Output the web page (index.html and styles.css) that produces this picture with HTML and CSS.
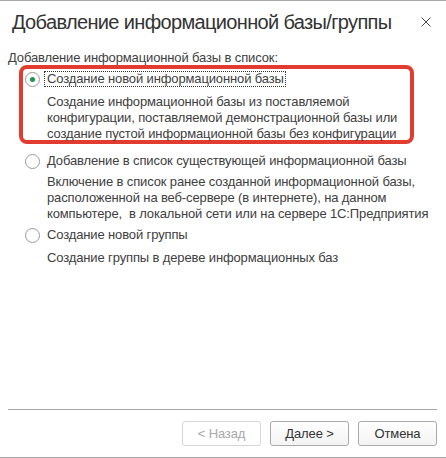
FILE: index.html
```html
<!DOCTYPE html>
<html lang="ru">
<head>
<meta charset="utf-8">
<title>Добавление информационной базы/группы</title>
<link rel="stylesheet" href="styles.css">
</head>
<body>
<div class="window">
  <div class="titlebar">
    <div class="title">Добавление информационной базы/группы</div>
    <div class="close">
      <svg width="10" height="10" viewBox="0 0 10 10"><path d="M0.5 0.5 L9.5 9.5 M9.5 0.5 L0.5 9.5" stroke="#4a4a4a" stroke-width="1" fill="none"/></svg>
    </div>
  </div>
  <div class="content">
    <div class="subtitle">Добавление информационной базы в список:</div>
    <div class="group highlight">
      <div class="radio-row">
        <span class="radio checked"></span>
        <span class="label focus">Создание новой информационной базы</span>
      </div>
      <div class="desc last-in-box">Создание информационной базы из поставляемой<br>конфигурации, поставляемой демонстрационной базы или<br>создание пустой информационной базы без конфигурации</div>
    </div>
    <div class="group">
      <div class="radio-row">
        <span class="radio"></span>
        <span class="label">Добавление в список существующей информационной базы</span>
      </div>
      <div class="desc">Включение в список ранее созданной информационной базы,<br>расположенной на веб-сервере (в интернете), на данном<br>компьютере,&nbsp; в локальной сети или на сервере 1С:Предприятия</div>
    </div>
    <div class="group third">
      <div class="radio-row">
        <span class="radio"></span>
        <span class="label">Создание новой группы</span>
      </div>
      <div class="desc">Создание группы в дереве информационных баз</div>
    </div>
  </div>
  <div class="footer">
    <div class="separator"></div>
    <div class="buttons">
      <div class="btn disabled">&lt; Назад</div>
      <div class="btn">Далее &gt;</div>
      <div class="btn">Отмена</div>
    </div>
  </div>
</div>
</body>
</html>
```
FILE: styles.css
```css
* { box-sizing: border-box; }
html, body { margin: 0; padding: 0; background: #fff; }
body {
  font-family: "Liberation Sans", Arial, sans-serif;
  font-size: 13px;
  letter-spacing: -0.13px;
  color: #404040;
}
.window {
  width: 446px;
  height: 458px;
  border-top: 1px solid #a6a6a6;
  border-bottom: 1px solid #a6a6a6;
  display: flex;
  flex-direction: column;
}
.titlebar {
  display: flex;
  align-items: flex-start;
  padding: 9px 0 0 12px;
  height: 33px;
}
.title {
  font-size: 20px;
  line-height: 24px;
  letter-spacing: -0.65px;
  color: #333;
  white-space: nowrap;
  flex: 1;
}
.close {
  width: 10px;
  height: 10px;
  margin: 7px 15px 0 0;
  display: flex;
}
.content {
  flex: 1;
  padding: 0 8px;
}
.subtitle {
  margin-top: 16px;
  line-height: 16px;
  white-space: nowrap;
}
.group {
  margin-left: 17px;
  margin-top: 4px;
}
.group.highlight {
  margin-left: 11px;
  margin-right: 24px;
  margin-top: -1px;
  border: 4px solid #e23b30;
  border-radius: 8px;
  padding: 2px 0 0 2px;
}
.group.highlight + .group { margin-top: 9px; }
.group.third { margin-top: 5px; }
.radio-row {
  display: flex;
  align-items: center;
  height: 16px;
}
.radio {
  width: 15px;
  height: 15px;
  border: 1px solid #9a9a9a;
  border-radius: 50%;
  background: #fff;
  display: flex;
  align-items: center;
  justify-content: center;
  flex: none;
  margin-right: 4px;
}
.radio.checked::after {
  content: "";
  width: 5px;
  height: 5px;
  border-radius: 50%;
  background: #17994a;
}
.label {
  line-height: 14px;
  padding: 0 1px 0 2px;
  border: 1px solid transparent;
  white-space: nowrap;
}
.label.focus { border: 1px dotted #333; }
.desc {
  margin: 7px 0 0 22px;
  line-height: 16px;
  white-space: nowrap;
}
.desc.last-in-box { margin-bottom: -2px; }
.group:not(.highlight) .desc { margin-top: 5px; }
.group.third .desc { margin-top: 7px; }
.footer { padding: 0 0 11px 0; }
.separator {
  height: 1px;
  background: #a6a6a6;
  margin: 0 9px 0 8px;
}
.buttons {
  display: flex;
  justify-content: flex-end;
  gap: 9px;
  padding-right: 9px;
  margin-top: 11px;
}
.btn {
  width: 79px;
  height: 25px;
  border: 1px solid #aaa;
  border-radius: 3px;
  background: linear-gradient(#ffffff, #f3f3f3);
  color: #333;
  display: flex;
  align-items: center;
  justify-content: center;
  line-height: 16px;
}
.btn.disabled {
  border-color: #d6d6d6;
  color: #a8a8a8;
  background: #fff;
}
```
